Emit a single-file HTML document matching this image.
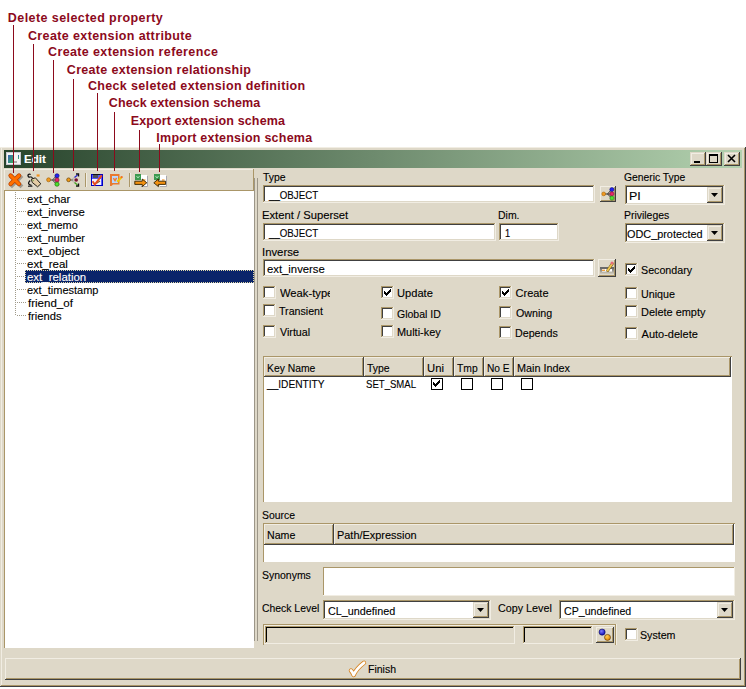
<!DOCTYPE html>
<html><head><meta charset="utf-8"><style>
html,body{margin:0;padding:0;background:#fff;width:746px;height:689px;overflow:hidden;position:relative}
body div{position:absolute}
.t{font-family:"Liberation Sans",sans-serif;white-space:nowrap;-webkit-text-stroke:0.12px currentColor}
svg{overflow:visible}
</style></head><body>
<div style="left:0px;top:147px;width:746px;height:540px;background:#ded8c8;"></div><div style="left:0px;top:147px;width:745px;height:1px;background:#f1ede3;"></div><div style="left:1px;top:148px;width:1px;height:538px;background:#f1ede3;"></div><div style="left:1px;top:685px;width:744px;height:1px;background:#aa9668;"></div><div style="left:744px;top:148px;width:1px;height:538px;background:#aa9668;"></div><div style="left:0px;top:686px;width:746px;height:1px;background:#404040;"></div><div style="left:745px;top:147px;width:1px;height:540px;background:#404040;"></div><div style="left:4px;top:150px;width:738px;height:18px;background:linear-gradient(to right, rgb(40,68,44), rgb(179,209,175));"></div><div style="left:6px;top:152px;width:15px;height:13px;background:#f4f4f4;box-shadow: inset 0 0 0 1px #c8c8d0;"></div><div style="left:8px;top:155px;width:5px;height:8px;background:linear-gradient(to bottom right, #3a64b4, #38b060);"></div><div style="left:18px;top:155px;width:1px;height:4px;background:linear-gradient(#3a64b4,#38b060);"></div><div style="left:14px;top:161px;width:3px;height:2px;background:#b0b0b0;"></div><div class="t" style="left:23.72px;top:153px;font-size:11px;line-height:13px;font-weight:bold;color:#fff;transform:scaleX(1.0550);transform-origin:0 0;">Edit</div><div style="left:690px;top:152px;width:16px;height:14px;background:#ded8c8;"></div><div style="left:690px;top:152px;width:15px;height:1px;background:#ded8c8;"></div><div style="left:690px;top:152px;width:1px;height:13px;background:#ded8c8;"></div><div style="left:691px;top:153px;width:13px;height:1px;background:#f1ede3;"></div><div style="left:691px;top:153px;width:1px;height:11px;background:#f1ede3;"></div><div style="left:691px;top:164px;width:14px;height:1px;background:#aa9668;"></div><div style="left:704px;top:153px;width:1px;height:12px;background:#aa9668;"></div><div style="left:690px;top:165px;width:16px;height:1px;background:#404040;"></div><div style="left:705px;top:152px;width:1px;height:14px;background:#404040;"></div><div style="left:706px;top:152px;width:16px;height:14px;background:#ded8c8;"></div><div style="left:706px;top:152px;width:15px;height:1px;background:#ded8c8;"></div><div style="left:706px;top:152px;width:1px;height:13px;background:#ded8c8;"></div><div style="left:707px;top:153px;width:13px;height:1px;background:#f1ede3;"></div><div style="left:707px;top:153px;width:1px;height:11px;background:#f1ede3;"></div><div style="left:707px;top:164px;width:14px;height:1px;background:#aa9668;"></div><div style="left:720px;top:153px;width:1px;height:12px;background:#aa9668;"></div><div style="left:706px;top:165px;width:16px;height:1px;background:#404040;"></div><div style="left:721px;top:152px;width:1px;height:14px;background:#404040;"></div><div style="left:724px;top:152px;width:16px;height:14px;background:#ded8c8;"></div><div style="left:724px;top:152px;width:15px;height:1px;background:#ded8c8;"></div><div style="left:724px;top:152px;width:1px;height:13px;background:#ded8c8;"></div><div style="left:725px;top:153px;width:13px;height:1px;background:#f1ede3;"></div><div style="left:725px;top:153px;width:1px;height:11px;background:#f1ede3;"></div><div style="left:725px;top:164px;width:14px;height:1px;background:#aa9668;"></div><div style="left:738px;top:153px;width:1px;height:12px;background:#aa9668;"></div><div style="left:724px;top:165px;width:16px;height:1px;background:#404040;"></div><div style="left:739px;top:152px;width:1px;height:14px;background:#404040;"></div><svg style="position:absolute;left:690px;top:152px" width="16" height="14" viewBox="0 0 16 14"><rect x="4" y="9" width="6" height="2" fill="#000"/></svg><svg style="position:absolute;left:706px;top:152px" width="16" height="14" viewBox="0 0 16 14"><rect x="3.5" y="2.5" width="8" height="8" fill="none" stroke="#000" stroke-width="1"/><rect x="3" y="2" width="9" height="2" fill="#000"/></svg><svg style="position:absolute;left:724px;top:152px" width="16" height="14" viewBox="0 0 16 14"><path d="M4 3 L11 10 M11 3 L4 10" stroke="#000" stroke-width="1.6"/></svg><div style="left:4px;top:168px;width:250px;height:23px;background:#ded8c8;"></div><div style="left:4px;top:169px;width:249px;height:1px;background:#f1ede3;"></div><div style="left:4px;top:169px;width:1px;height:21px;background:#f1ede3;"></div><div style="left:4px;top:190px;width:250px;height:1px;background:#aa9668;"></div><div style="left:253px;top:169px;width:1px;height:22px;background:#aa9668;"></div><div style="left:85px;top:173px;width:1px;height:14px;background:#aa9668;"></div><div style="left:86px;top:173px;width:1px;height:14px;background:#f1ede3;"></div><div style="left:129px;top:173px;width:1px;height:14px;background:#aa9668;"></div><div style="left:130px;top:173px;width:1px;height:14px;background:#f1ede3;"></div><svg style="position:absolute;left:8px;top:173px" width="15" height="15" viewBox="0 0 15 15"><path d="M3 3 L11.5 11.5 M11.5 3 L3 11.5" stroke="rgba(40,40,40,0.35)" stroke-width="4" stroke-linecap="square" transform="translate(1,1)"/><path d="M2.6 2.6 L11 11 M11 2.6 L2.6 11" stroke="#b84000" stroke-width="4.4" stroke-linecap="round"/><path d="M2.6 2.6 L11 11 M11 2.6 L2.6 11" stroke="#ff7000" stroke-width="3" stroke-linecap="round"/></svg><svg style="position:absolute;left:26px;top:172px" width="16" height="16" viewBox="0 0 16 16"><path d="M4.6 2.6 A1.5 1.5 0 1 0 4.6 4.6" fill="none" stroke="#111" stroke-width="1.3"/><path d="M4.8 4.6 L7.5 7" stroke="#222" stroke-width="1.2"/><path d="M5.4 7.2 L9.4 5.8 L14.8 11.8 L11.6 14.8 L6.2 10.4 Z" fill="#e4cca4" stroke="#262218" stroke-width="1"/><circle cx="7.2" cy="8.6" r="0.7" fill="#70a040"/><path d="M4.2 8.4 Q2.2 10 2.6 11.8 Q3.2 13 5.6 13.4" fill="none" stroke="#111" stroke-width="1.3"/><path d="M2 14.2 H6.4" stroke="#222" stroke-width="1.2"/><rect x="10.6" y="2.4" width="3" height="2.2" fill="#f09020"/></svg><svg style="position:absolute;left:45px;top:172px" width="16" height="16" viewBox="0 0 16 16"><path d="M5 8 L7.5 8 M7.5 8 L11 4.2 M7.5 8 L11 8 M7.5 8 L11 11.8" stroke="#444" stroke-width="1" fill="none"/><circle cx="3.6" cy="7.8" r="2" fill="#f09a20" stroke="#9a5a00" stroke-width="0.6"/><circle cx="12" cy="3.8" r="2.1" fill="#2424f0" stroke="#00006a" stroke-width="0.6"/><circle cx="12" cy="8" r="2.1" fill="#e8246a" stroke="#6a0020" stroke-width="0.6"/><circle cx="12" cy="12.2" r="2.1" fill="#50e030" stroke="#106000" stroke-width="0.6"/></svg><svg style="position:absolute;left:65px;top:172px" width="16" height="16" viewBox="0 0 16 16"><path d="M5 8 L9.5 4.5 L9.5 11.5 Z" fill="#c4c0b4"/><path d="M5 8 L8 8" stroke="#666" stroke-width="1"/><circle cx="3.6" cy="7.8" r="1.9" fill="#f09a18" stroke="#6a4000" stroke-width="0.7"/><circle cx="11.2" cy="8" r="1.8" fill="#7a1030"/><path d="M11 2 H13.5 V4.5" stroke="#111" stroke-width="1.4" fill="none"/><path d="M9.5 5.5 L12.5 3" stroke="#2828d0" stroke-width="1.3"/><path d="M11 14 H13.5 V11.5" stroke="#111" stroke-width="1.4" fill="none"/><path d="M9.5 10.5 L12.5 13" stroke="#40a020" stroke-width="1.3"/></svg><svg style="position:absolute;left:90px;top:173px" width="14" height="14" viewBox="0 0 14 14"><rect x="1" y="1" width="12" height="12" fill="#0000c0"/><rect x="2" y="2" width="10" height="10" fill="#5858ff"/><rect x="3" y="1" width="7" height="1" fill="#101018"/><rect x="3" y="2" width="5" height="3" fill="#50505a"/><rect x="2" y="6" width="9" height="6" fill="#f2f2ff"/><path d="M6.5 10.2 L10 8" stroke="#806020" stroke-width="1.2"/><path d="M2.6 8.2 L4.8 11.6 L11.8 2.4" stroke="#e84a1c" stroke-width="1.9" fill="none"/></svg><svg style="position:absolute;left:110px;top:174px" width="13" height="13" viewBox="0 0 13 13"><path d="M0 0 H9.5 V10.5 H3 L1.5 12 H0 Z" fill="#e87a30"/><rect x="2" y="2" width="6" height="7" fill="#b8d8ff"/><path d="M3.4 4.2 L5 6.6 L6.6 3.8" stroke="#f07a30" stroke-width="1.5" fill="none"/><path d="M7.2 7.8 L11.2 3.6" stroke="#f0c800" stroke-width="2.1"/><circle cx="11.6" cy="3.1" r="1.2" fill="#f07020"/></svg><svg style="position:absolute;left:134px;top:173px" width="14" height="14" viewBox="0 0 14 14"><rect x="7" y="2" width="6" height="11" fill="#ffffff"/><path d="M13.5 3 V13.5 H7" stroke="#a8a8b0" stroke-width="1" fill="none"/><rect x="9" y="6" width="2.5" height="2" fill="#f8c080"/><rect x="1" y="1" width="6" height="6" fill="#3c9a50"/><path d="M2.5 3 L4 5 L5.5 3" stroke="#b0e8c0" stroke-width="0.9" fill="none"/><path d="M0.8 8.2 H8.2 V6 L12.8 9.8 L8.2 13.6 V11.4 H0.8 Z" fill="#f39010" stroke="#302000" stroke-width="0.9"/></svg><svg style="position:absolute;left:153px;top:173px" width="14" height="14" viewBox="0 0 14 14"><rect x="7" y="2" width="6" height="11" fill="#ffffff"/><path d="M13.5 3 V13.5 H7" stroke="#a8a8b0" stroke-width="1" fill="none"/><rect x="9" y="6" width="2.5" height="2" fill="#f8c080"/><rect x="1" y="1" width="6" height="6" fill="#3c9a50"/><path d="M2.5 3 L4 5 L5.5 3" stroke="#b0e8c0" stroke-width="0.9" fill="none"/><path d="M12.6 8.2 H5.4 V6 L0.8 9.8 L5.4 13.6 V11.4 H12.6 Z" fill="#f39010" stroke="#302000" stroke-width="0.9"/></svg><div style="left:5px;top:191px;width:249px;height:457px;background:#fff;"></div><div style="left:4px;top:191px;width:1px;height:457px;background:#aa9668;"></div><svg style="position:absolute;left:15px;top:192px" width="12" height="125" viewBox="0 0 12 125"><g fill="#a09a8a"><rect x="0" y="0" width="1" height="1"/><rect x="0" y="2" width="1" height="1"/><rect x="0" y="4" width="1" height="1"/><rect x="0" y="6" width="1" height="1"/><rect x="0" y="8" width="1" height="1"/><rect x="0" y="10" width="1" height="1"/><rect x="0" y="12" width="1" height="1"/><rect x="0" y="14" width="1" height="1"/><rect x="0" y="16" width="1" height="1"/><rect x="0" y="18" width="1" height="1"/><rect x="0" y="20" width="1" height="1"/><rect x="0" y="22" width="1" height="1"/><rect x="0" y="24" width="1" height="1"/><rect x="0" y="26" width="1" height="1"/><rect x="0" y="28" width="1" height="1"/><rect x="0" y="30" width="1" height="1"/><rect x="0" y="32" width="1" height="1"/><rect x="0" y="34" width="1" height="1"/><rect x="0" y="36" width="1" height="1"/><rect x="0" y="38" width="1" height="1"/><rect x="0" y="40" width="1" height="1"/><rect x="0" y="42" width="1" height="1"/><rect x="0" y="44" width="1" height="1"/><rect x="0" y="46" width="1" height="1"/><rect x="0" y="48" width="1" height="1"/><rect x="0" y="50" width="1" height="1"/><rect x="0" y="52" width="1" height="1"/><rect x="0" y="54" width="1" height="1"/><rect x="0" y="56" width="1" height="1"/><rect x="0" y="58" width="1" height="1"/><rect x="0" y="60" width="1" height="1"/><rect x="0" y="62" width="1" height="1"/><rect x="0" y="64" width="1" height="1"/><rect x="0" y="66" width="1" height="1"/><rect x="0" y="68" width="1" height="1"/><rect x="0" y="70" width="1" height="1"/><rect x="0" y="72" width="1" height="1"/><rect x="0" y="74" width="1" height="1"/><rect x="0" y="76" width="1" height="1"/><rect x="0" y="78" width="1" height="1"/><rect x="0" y="80" width="1" height="1"/><rect x="0" y="82" width="1" height="1"/><rect x="0" y="84" width="1" height="1"/><rect x="0" y="86" width="1" height="1"/><rect x="0" y="88" width="1" height="1"/><rect x="0" y="90" width="1" height="1"/><rect x="0" y="92" width="1" height="1"/><rect x="0" y="94" width="1" height="1"/><rect x="0" y="96" width="1" height="1"/><rect x="0" y="98" width="1" height="1"/><rect x="0" y="100" width="1" height="1"/><rect x="0" y="102" width="1" height="1"/><rect x="0" y="104" width="1" height="1"/><rect x="0" y="106" width="1" height="1"/><rect x="0" y="108" width="1" height="1"/><rect x="0" y="110" width="1" height="1"/><rect x="0" y="112" width="1" height="1"/><rect x="0" y="114" width="1" height="1"/><rect x="0" y="116" width="1" height="1"/><rect x="0" y="118" width="1" height="1"/><rect x="0" y="120" width="1" height="1"/><rect x="0" y="122" width="1" height="1"/><rect x="2" y="6" width="1" height="1"/><rect x="4" y="6" width="1" height="1"/><rect x="6" y="6" width="1" height="1"/><rect x="8" y="6" width="1" height="1"/><rect x="10" y="6" width="1" height="1"/><rect x="2" y="19" width="1" height="1"/><rect x="4" y="19" width="1" height="1"/><rect x="6" y="19" width="1" height="1"/><rect x="8" y="19" width="1" height="1"/><rect x="10" y="19" width="1" height="1"/><rect x="2" y="32" width="1" height="1"/><rect x="4" y="32" width="1" height="1"/><rect x="6" y="32" width="1" height="1"/><rect x="8" y="32" width="1" height="1"/><rect x="10" y="32" width="1" height="1"/><rect x="2" y="45" width="1" height="1"/><rect x="4" y="45" width="1" height="1"/><rect x="6" y="45" width="1" height="1"/><rect x="8" y="45" width="1" height="1"/><rect x="10" y="45" width="1" height="1"/><rect x="2" y="58" width="1" height="1"/><rect x="4" y="58" width="1" height="1"/><rect x="6" y="58" width="1" height="1"/><rect x="8" y="58" width="1" height="1"/><rect x="10" y="58" width="1" height="1"/><rect x="2" y="71" width="1" height="1"/><rect x="4" y="71" width="1" height="1"/><rect x="6" y="71" width="1" height="1"/><rect x="8" y="71" width="1" height="1"/><rect x="10" y="71" width="1" height="1"/><rect x="2" y="84" width="1" height="1"/><rect x="4" y="84" width="1" height="1"/><rect x="6" y="84" width="1" height="1"/><rect x="8" y="84" width="1" height="1"/><rect x="10" y="84" width="1" height="1"/><rect x="2" y="97" width="1" height="1"/><rect x="4" y="97" width="1" height="1"/><rect x="6" y="97" width="1" height="1"/><rect x="8" y="97" width="1" height="1"/><rect x="10" y="97" width="1" height="1"/><rect x="2" y="110" width="1" height="1"/><rect x="4" y="110" width="1" height="1"/><rect x="6" y="110" width="1" height="1"/><rect x="8" y="110" width="1" height="1"/><rect x="10" y="110" width="1" height="1"/><rect x="2" y="123" width="1" height="1"/><rect x="4" y="123" width="1" height="1"/><rect x="6" y="123" width="1" height="1"/><rect x="8" y="123" width="1" height="1"/><rect x="10" y="123" width="1" height="1"/></g></svg><div class="t" style="left:26.92px;top:193px;font-size:11px;line-height:13px;font-weight:normal;color:#000;transform:scaleX(1.0255);transform-origin:0 0;">ext_char</div><div class="t" style="left:26.92px;top:206px;font-size:11px;line-height:13px;font-weight:normal;color:#000;transform:scaleX(1.0272);transform-origin:0 0;">ext_inverse</div><div class="t" style="left:26.94px;top:219px;font-size:11px;line-height:13px;font-weight:normal;color:#000;transform:scaleX(0.9876);transform-origin:0 0;">ext_memo</div><div class="t" style="left:26.93px;top:232px;font-size:11px;line-height:13px;font-weight:normal;color:#000;">ext_number</div><div class="t" style="left:26.91px;top:245px;font-size:11px;line-height:13px;font-weight:normal;color:#000;transform:scaleX(1.0485);transform-origin:0 0;">ext_object</div><div class="t" style="left:26.91px;top:258px;font-size:11px;line-height:13px;font-weight:normal;color:#000;transform:scaleX(1.0440);transform-origin:0 0;">ext_real</div><div style="left:25px;top:270px;width:229px;height:13px;background:#0a246a;box-sizing:border-box;border:1px dotted #e0d8a8;"></div><div class="t" style="left:26.91px;top:271px;font-size:11px;line-height:13px;font-weight:normal;color:#fff;transform:scaleX(1.0415);transform-origin:0 0;">ext_relation</div><div class="t" style="left:26.93px;top:284px;font-size:11px;line-height:13px;font-weight:normal;color:#000;">ext_timestamp</div><div class="t" style="left:27.84px;top:297px;font-size:11px;line-height:13px;font-weight:normal;color:#000;transform:scaleX(1.0476);transform-origin:0 0;">friend_of</div><div class="t" style="left:27.84px;top:310px;font-size:11px;line-height:13px;font-weight:normal;color:#000;transform:scaleX(1.0165);transform-origin:0 0;">friends</div><div style="left:254px;top:178px;width:1px;height:463px;background:#9c9688;"></div><div style="left:257px;top:178px;width:1px;height:463px;background:#9c9688;"></div><div class="t" style="left:262.87px;top:171px;font-size:11px;line-height:13px;font-weight:normal;color:#000;transform:scaleX(0.9486);transform-origin:0 0;">Type</div><div style="left:263px;top:185px;width:332px;height:18px;background:#fff;"></div><div style="left:263px;top:185px;width:331px;height:1px;background:#aa9668;"></div><div style="left:263px;top:185px;width:1px;height:17px;background:#aa9668;"></div><div style="left:263px;top:202px;width:332px;height:1px;background:#f1ede3;"></div><div style="left:594px;top:185px;width:1px;height:18px;background:#f1ede3;"></div><div style="left:264px;top:186px;width:329px;height:1px;background:#404040;"></div><div style="left:264px;top:186px;width:1px;height:15px;background:#404040;"></div><div style="left:264px;top:201px;width:330px;height:1px;background:#ded8c8;"></div><div style="left:593px;top:186px;width:1px;height:16px;background:#ded8c8;"></div><div class="t" style="left:268.95px;top:189px;font-size:11px;line-height:13px;font-weight:normal;color:#000;transform:scaleX(0.8822);transform-origin:0 0;">__OBJECT</div><div style="left:600px;top:186px;width:16px;height:16px;background:#ded8c8;"></div><div style="left:600px;top:186px;width:15px;height:1px;background:#f1ede3;"></div><div style="left:600px;top:186px;width:1px;height:15px;background:#f1ede3;"></div><div style="left:601px;top:200px;width:14px;height:1px;background:#aa9668;"></div><div style="left:614px;top:187px;width:1px;height:14px;background:#aa9668;"></div><div style="left:600px;top:201px;width:16px;height:1px;background:#404040;"></div><div style="left:615px;top:186px;width:1px;height:16px;background:#404040;"></div><svg style="position:absolute;left:600px;top:186px" width="16" height="16" viewBox="0 0 16 16"><path d="M5 8 L7.5 8 M7.5 8 L11.5 3.6 M7.5 8 L11.5 8 M7.5 8 L11.5 12" stroke="#333" stroke-width="1" fill="none"/><circle cx="3.7" cy="7.9" r="1.9" fill="#f09a20" stroke="#9a5a00" stroke-width="0.5"/><circle cx="11.9" cy="3.6" r="2.1" fill="#2020f0" stroke="#00006a" stroke-width="0.5"/><circle cx="11.9" cy="7.9" r="2.1" fill="#e8246a" stroke="#6a0020" stroke-width="0.5"/><circle cx="11.9" cy="12.1" r="2.1" fill="#50e030" stroke="#106000" stroke-width="0.5"/></svg><div class="t" style="left:624.28px;top:171px;font-size:11px;line-height:13px;font-weight:normal;color:#000;transform:scaleX(0.9387);transform-origin:0 0;">Generic Type</div><div style="left:625px;top:185px;width:100px;height:20px;background:#fff;"></div><div style="left:625px;top:185px;width:99px;height:1px;background:#aa9668;"></div><div style="left:625px;top:185px;width:1px;height:19px;background:#aa9668;"></div><div style="left:625px;top:204px;width:100px;height:1px;background:#f1ede3;"></div><div style="left:724px;top:185px;width:1px;height:20px;background:#f1ede3;"></div><div style="left:626px;top:186px;width:97px;height:1px;background:#404040;"></div><div style="left:626px;top:186px;width:1px;height:17px;background:#404040;"></div><div style="left:626px;top:203px;width:98px;height:1px;background:#ded8c8;"></div><div style="left:723px;top:186px;width:1px;height:18px;background:#ded8c8;"></div><div style="left:707px;top:187px;width:16px;height:16px;background:#ded8c8;"></div><div style="left:707px;top:187px;width:15px;height:1px;background:#ded8c8;"></div><div style="left:707px;top:187px;width:1px;height:15px;background:#ded8c8;"></div><div style="left:708px;top:188px;width:13px;height:1px;background:#f1ede3;"></div><div style="left:708px;top:188px;width:1px;height:13px;background:#f1ede3;"></div><div style="left:708px;top:201px;width:14px;height:1px;background:#aa9668;"></div><div style="left:721px;top:188px;width:1px;height:14px;background:#aa9668;"></div><div style="left:707px;top:202px;width:16px;height:1px;background:#404040;"></div><div style="left:722px;top:187px;width:1px;height:16px;background:#404040;"></div><svg style="position:absolute;left:711px;top:193px" width="7" height="4" viewBox="0 0 7 4"><path d="M0 0 H7 L3.5 4 Z" fill="#000"/></svg><div class="t" style="left:629.28px;top:190px;font-size:11px;line-height:13px;font-weight:normal;color:#000;transform:scaleX(1.1327);transform-origin:0 0;width:68.62px;overflow:hidden;">PI</div><div class="t" style="left:261.78px;top:209px;font-size:11px;line-height:13px;font-weight:normal;color:#000;transform:scaleX(1.0216);transform-origin:0 0;">Extent / Superset</div><div style="left:263px;top:223px;width:233px;height:18px;background:#fff;"></div><div style="left:263px;top:223px;width:232px;height:1px;background:#aa9668;"></div><div style="left:263px;top:223px;width:1px;height:17px;background:#aa9668;"></div><div style="left:263px;top:240px;width:233px;height:1px;background:#f1ede3;"></div><div style="left:495px;top:223px;width:1px;height:18px;background:#f1ede3;"></div><div style="left:264px;top:224px;width:230px;height:1px;background:#404040;"></div><div style="left:264px;top:224px;width:1px;height:15px;background:#404040;"></div><div style="left:264px;top:239px;width:231px;height:1px;background:#ded8c8;"></div><div style="left:494px;top:224px;width:1px;height:16px;background:#ded8c8;"></div><div class="t" style="left:268.95px;top:227px;font-size:11px;line-height:13px;font-weight:normal;color:#000;transform:scaleX(0.8822);transform-origin:0 0;">__OBJECT</div><div class="t" style="left:498.04px;top:209px;font-size:11px;line-height:13px;font-weight:normal;color:#000;transform:scaleX(0.9517);transform-origin:0 0;">Dim.</div><div style="left:499px;top:223px;width:60px;height:18px;background:#fff;"></div><div style="left:499px;top:223px;width:59px;height:1px;background:#aa9668;"></div><div style="left:499px;top:223px;width:1px;height:17px;background:#aa9668;"></div><div style="left:499px;top:240px;width:60px;height:1px;background:#f1ede3;"></div><div style="left:558px;top:223px;width:1px;height:18px;background:#f1ede3;"></div><div style="left:500px;top:224px;width:57px;height:1px;background:#404040;"></div><div style="left:500px;top:224px;width:1px;height:15px;background:#404040;"></div><div style="left:500px;top:239px;width:58px;height:1px;background:#ded8c8;"></div><div style="left:557px;top:224px;width:1px;height:16px;background:#ded8c8;"></div><div class="t" style="left:504.59px;top:227px;font-size:11px;line-height:13px;font-weight:normal;color:#000;transform:scaleX(0.8434);transform-origin:0 0;">1</div><div class="t" style="left:623.94px;top:209px;font-size:11px;line-height:13px;font-weight:normal;color:#000;transform:scaleX(0.9486);transform-origin:0 0;">Privileges</div><div style="left:625px;top:223px;width:100px;height:20px;background:#fff;"></div><div style="left:625px;top:223px;width:99px;height:1px;background:#aa9668;"></div><div style="left:625px;top:223px;width:1px;height:19px;background:#aa9668;"></div><div style="left:625px;top:242px;width:100px;height:1px;background:#f1ede3;"></div><div style="left:724px;top:223px;width:1px;height:20px;background:#f1ede3;"></div><div style="left:626px;top:224px;width:97px;height:1px;background:#404040;"></div><div style="left:626px;top:224px;width:1px;height:17px;background:#404040;"></div><div style="left:626px;top:241px;width:98px;height:1px;background:#ded8c8;"></div><div style="left:723px;top:224px;width:1px;height:18px;background:#ded8c8;"></div><div style="left:707px;top:225px;width:16px;height:16px;background:#ded8c8;"></div><div style="left:707px;top:225px;width:15px;height:1px;background:#ded8c8;"></div><div style="left:707px;top:225px;width:1px;height:15px;background:#ded8c8;"></div><div style="left:708px;top:226px;width:13px;height:1px;background:#f1ede3;"></div><div style="left:708px;top:226px;width:1px;height:13px;background:#f1ede3;"></div><div style="left:708px;top:239px;width:14px;height:1px;background:#aa9668;"></div><div style="left:721px;top:226px;width:1px;height:14px;background:#aa9668;"></div><div style="left:707px;top:240px;width:16px;height:1px;background:#404040;"></div><div style="left:722px;top:225px;width:1px;height:16px;background:#404040;"></div><svg style="position:absolute;left:711px;top:231px" width="7" height="4" viewBox="0 0 7 4"><path d="M0 0 H7 L3.5 4 Z" fill="#000"/></svg><div class="t" style="left:627.19px;top:228px;font-size:11px;line-height:13px;font-weight:normal;color:#000;transform:scaleX(0.9881);transform-origin:0 0;width:80.78px;overflow:hidden;">ODC_protected</div><div class="t" style="left:262.25px;top:246px;font-size:11px;line-height:13px;font-weight:normal;color:#000;transform:scaleX(1.0298);transform-origin:0 0;">Inverse</div><div style="left:263px;top:259px;width:332px;height:18px;background:#fff;"></div><div style="left:263px;top:259px;width:331px;height:1px;background:#aa9668;"></div><div style="left:263px;top:259px;width:1px;height:17px;background:#aa9668;"></div><div style="left:263px;top:276px;width:332px;height:1px;background:#f1ede3;"></div><div style="left:594px;top:259px;width:1px;height:18px;background:#f1ede3;"></div><div style="left:264px;top:260px;width:329px;height:1px;background:#404040;"></div><div style="left:264px;top:260px;width:1px;height:15px;background:#404040;"></div><div style="left:264px;top:275px;width:330px;height:1px;background:#ded8c8;"></div><div style="left:593px;top:260px;width:1px;height:16px;background:#ded8c8;"></div><div class="t" style="left:267.02px;top:263px;font-size:11px;line-height:13px;font-weight:normal;color:#000;transform:scaleX(1.0272);transform-origin:0 0;">ext_inverse</div><div style="left:598px;top:259px;width:18px;height:18px;background:#ded8c8;"></div><div style="left:598px;top:259px;width:17px;height:1px;background:#f1ede3;"></div><div style="left:598px;top:259px;width:1px;height:17px;background:#f1ede3;"></div><div style="left:599px;top:275px;width:16px;height:1px;background:#aa9668;"></div><div style="left:614px;top:260px;width:1px;height:16px;background:#aa9668;"></div><div style="left:598px;top:276px;width:18px;height:1px;background:#404040;"></div><div style="left:615px;top:259px;width:1px;height:18px;background:#404040;"></div><svg style="position:absolute;left:598px;top:259px" width="18" height="18" viewBox="0 0 18 18"><defs><linearGradient id="gsh" x1="0" y1="0" x2="0" y2="1"><stop offset="0" stop-color="#5a5a5a"/><stop offset="1" stop-color="#ded8c8"/></linearGradient></defs><rect x="2" y="8" width="14" height="7.5" fill="url(#gsh)"/><rect x="2" y="8" width="14" height="2" fill="#6a6a6a"/><rect x="4" y="10" width="10" height="2.6" fill="#ffffff"/><rect x="4" y="10.6" width="3" height="1.4" fill="#f0a040"/><path d="M9.6 11.6 L14.4 4.6" stroke="#7a6020" stroke-width="2.8" stroke-linecap="round"/><path d="M9.6 11.6 L14.4 4.6" stroke="#f0c850" stroke-width="1.8" stroke-linecap="round"/><circle cx="14" cy="4" r="1.5" fill="#e86a7a"/></svg><div style="left:625px;top:263px;width:13px;height:13px;background:#fff;"></div><div style="left:625px;top:263px;width:12px;height:1px;background:#aa9668;"></div><div style="left:625px;top:263px;width:1px;height:12px;background:#aa9668;"></div><div style="left:625px;top:275px;width:13px;height:1px;background:#f1ede3;"></div><div style="left:637px;top:263px;width:1px;height:13px;background:#f1ede3;"></div><div style="left:626px;top:264px;width:10px;height:1px;background:#404040;"></div><div style="left:626px;top:264px;width:1px;height:10px;background:#404040;"></div><div style="left:626px;top:274px;width:11px;height:1px;background:#ded8c8;"></div><div style="left:636px;top:264px;width:1px;height:11px;background:#ded8c8;"></div><div style="left:628px;top:268px;width:1px;height:3px;background:#000;"></div><div style="left:629px;top:269px;width:1px;height:3px;background:#000;"></div><div style="left:630px;top:270px;width:1px;height:3px;background:#000;"></div><div style="left:631px;top:269px;width:1px;height:3px;background:#000;"></div><div style="left:632px;top:268px;width:1px;height:3px;background:#000;"></div><div style="left:633px;top:267px;width:1px;height:3px;background:#000;"></div><div style="left:634px;top:266px;width:1px;height:3px;background:#000;"></div><div class="t" style="left:641.11px;top:264px;font-size:11px;line-height:13px;font-weight:normal;color:#000;transform:scaleX(0.9718);transform-origin:0 0;">Secondary</div><div style="left:263px;top:286px;width:13px;height:13px;background:#fff;"></div><div style="left:263px;top:286px;width:12px;height:1px;background:#aa9668;"></div><div style="left:263px;top:286px;width:1px;height:12px;background:#aa9668;"></div><div style="left:263px;top:298px;width:13px;height:1px;background:#f1ede3;"></div><div style="left:275px;top:286px;width:1px;height:13px;background:#f1ede3;"></div><div style="left:264px;top:287px;width:10px;height:1px;background:#404040;"></div><div style="left:264px;top:287px;width:1px;height:10px;background:#404040;"></div><div style="left:264px;top:297px;width:11px;height:1px;background:#ded8c8;"></div><div style="left:274px;top:287px;width:1px;height:11px;background:#ded8c8;"></div><div class="t" style="left:279.65px;top:287px;font-size:11px;line-height:13px;font-weight:normal;color:#000;transform:scaleX(1.0185);transform-origin:0 0;width:49.04px;overflow:hidden;">Weak-type</div><div style="left:263px;top:304px;width:13px;height:13px;background:#fff;"></div><div style="left:263px;top:304px;width:12px;height:1px;background:#aa9668;"></div><div style="left:263px;top:304px;width:1px;height:12px;background:#aa9668;"></div><div style="left:263px;top:316px;width:13px;height:1px;background:#f1ede3;"></div><div style="left:275px;top:304px;width:1px;height:13px;background:#f1ede3;"></div><div style="left:264px;top:305px;width:10px;height:1px;background:#404040;"></div><div style="left:264px;top:305px;width:1px;height:10px;background:#404040;"></div><div style="left:264px;top:315px;width:11px;height:1px;background:#ded8c8;"></div><div style="left:274px;top:305px;width:1px;height:11px;background:#ded8c8;"></div><div class="t" style="left:279.36px;top:305px;font-size:11px;line-height:13px;font-weight:normal;color:#000;transform:scaleX(0.9665);transform-origin:0 0;">Transient</div><div style="left:263px;top:325px;width:13px;height:13px;background:#fff;"></div><div style="left:263px;top:325px;width:12px;height:1px;background:#aa9668;"></div><div style="left:263px;top:325px;width:1px;height:12px;background:#aa9668;"></div><div style="left:263px;top:337px;width:13px;height:1px;background:#f1ede3;"></div><div style="left:275px;top:325px;width:1px;height:13px;background:#f1ede3;"></div><div style="left:264px;top:326px;width:10px;height:1px;background:#404040;"></div><div style="left:264px;top:326px;width:1px;height:10px;background:#404040;"></div><div style="left:264px;top:336px;width:11px;height:1px;background:#ded8c8;"></div><div style="left:274px;top:326px;width:1px;height:11px;background:#ded8c8;"></div><div class="t" style="left:279.55px;top:326px;font-size:11px;line-height:13px;font-weight:normal;color:#000;transform:scaleX(0.9738);transform-origin:0 0;">Virtual</div><div style="left:381px;top:286px;width:13px;height:13px;background:#fff;"></div><div style="left:381px;top:286px;width:12px;height:1px;background:#aa9668;"></div><div style="left:381px;top:286px;width:1px;height:12px;background:#aa9668;"></div><div style="left:381px;top:298px;width:13px;height:1px;background:#f1ede3;"></div><div style="left:393px;top:286px;width:1px;height:13px;background:#f1ede3;"></div><div style="left:382px;top:287px;width:10px;height:1px;background:#404040;"></div><div style="left:382px;top:287px;width:1px;height:10px;background:#404040;"></div><div style="left:382px;top:297px;width:11px;height:1px;background:#ded8c8;"></div><div style="left:392px;top:287px;width:1px;height:11px;background:#ded8c8;"></div><div style="left:384px;top:291px;width:1px;height:3px;background:#000;"></div><div style="left:385px;top:292px;width:1px;height:3px;background:#000;"></div><div style="left:386px;top:293px;width:1px;height:3px;background:#000;"></div><div style="left:387px;top:292px;width:1px;height:3px;background:#000;"></div><div style="left:388px;top:291px;width:1px;height:3px;background:#000;"></div><div style="left:389px;top:290px;width:1px;height:3px;background:#000;"></div><div style="left:390px;top:289px;width:1px;height:3px;background:#000;"></div><div class="t" style="left:396.74px;top:287px;font-size:11px;line-height:13px;font-weight:normal;color:#000;transform:scaleX(1.0107);transform-origin:0 0;">Update</div><div style="left:381px;top:307px;width:13px;height:13px;background:#fff;"></div><div style="left:381px;top:307px;width:12px;height:1px;background:#aa9668;"></div><div style="left:381px;top:307px;width:1px;height:12px;background:#aa9668;"></div><div style="left:381px;top:319px;width:13px;height:1px;background:#f1ede3;"></div><div style="left:393px;top:307px;width:1px;height:13px;background:#f1ede3;"></div><div style="left:382px;top:308px;width:10px;height:1px;background:#404040;"></div><div style="left:382px;top:308px;width:1px;height:10px;background:#404040;"></div><div style="left:382px;top:318px;width:11px;height:1px;background:#ded8c8;"></div><div style="left:392px;top:308px;width:1px;height:11px;background:#ded8c8;"></div><div class="t" style="left:397.07px;top:308px;font-size:11px;line-height:13px;font-weight:normal;color:#000;transform:scaleX(0.9559);transform-origin:0 0;">Global ID</div><div style="left:381px;top:325px;width:13px;height:13px;background:#fff;"></div><div style="left:381px;top:325px;width:12px;height:1px;background:#aa9668;"></div><div style="left:381px;top:325px;width:1px;height:12px;background:#aa9668;"></div><div style="left:381px;top:337px;width:13px;height:1px;background:#f1ede3;"></div><div style="left:393px;top:325px;width:1px;height:13px;background:#f1ede3;"></div><div style="left:382px;top:326px;width:10px;height:1px;background:#404040;"></div><div style="left:382px;top:326px;width:1px;height:10px;background:#404040;"></div><div style="left:382px;top:336px;width:11px;height:1px;background:#ded8c8;"></div><div style="left:392px;top:326px;width:1px;height:11px;background:#ded8c8;"></div><div class="t" style="left:396.70px;top:326px;font-size:11px;line-height:13px;font-weight:normal;color:#000;transform:scaleX(0.9935);transform-origin:0 0;">Multi-key</div><div style="left:499px;top:286px;width:13px;height:13px;background:#fff;"></div><div style="left:499px;top:286px;width:12px;height:1px;background:#aa9668;"></div><div style="left:499px;top:286px;width:1px;height:12px;background:#aa9668;"></div><div style="left:499px;top:298px;width:13px;height:1px;background:#f1ede3;"></div><div style="left:511px;top:286px;width:1px;height:13px;background:#f1ede3;"></div><div style="left:500px;top:287px;width:10px;height:1px;background:#404040;"></div><div style="left:500px;top:287px;width:1px;height:10px;background:#404040;"></div><div style="left:500px;top:297px;width:11px;height:1px;background:#ded8c8;"></div><div style="left:510px;top:287px;width:1px;height:11px;background:#ded8c8;"></div><div style="left:502px;top:291px;width:1px;height:3px;background:#000;"></div><div style="left:503px;top:292px;width:1px;height:3px;background:#000;"></div><div style="left:504px;top:293px;width:1px;height:3px;background:#000;"></div><div style="left:505px;top:292px;width:1px;height:3px;background:#000;"></div><div style="left:506px;top:291px;width:1px;height:3px;background:#000;"></div><div style="left:507px;top:290px;width:1px;height:3px;background:#000;"></div><div style="left:508px;top:289px;width:1px;height:3px;background:#000;"></div><div class="t" style="left:515.54px;top:287px;font-size:11px;line-height:13px;font-weight:normal;color:#000;">Create</div><div style="left:499px;top:306px;width:13px;height:13px;background:#fff;"></div><div style="left:499px;top:306px;width:12px;height:1px;background:#aa9668;"></div><div style="left:499px;top:306px;width:1px;height:12px;background:#aa9668;"></div><div style="left:499px;top:318px;width:13px;height:1px;background:#f1ede3;"></div><div style="left:511px;top:306px;width:1px;height:13px;background:#f1ede3;"></div><div style="left:500px;top:307px;width:10px;height:1px;background:#404040;"></div><div style="left:500px;top:307px;width:1px;height:10px;background:#404040;"></div><div style="left:500px;top:317px;width:11px;height:1px;background:#ded8c8;"></div><div style="left:510px;top:307px;width:1px;height:11px;background:#ded8c8;"></div><div class="t" style="left:515.59px;top:307px;font-size:11px;line-height:13px;font-weight:normal;color:#000;transform:scaleX(0.9704);transform-origin:0 0;">Owning</div><div style="left:499px;top:326px;width:13px;height:13px;background:#fff;"></div><div style="left:499px;top:326px;width:12px;height:1px;background:#aa9668;"></div><div style="left:499px;top:326px;width:1px;height:12px;background:#aa9668;"></div><div style="left:499px;top:338px;width:13px;height:1px;background:#f1ede3;"></div><div style="left:511px;top:326px;width:1px;height:13px;background:#f1ede3;"></div><div style="left:500px;top:327px;width:10px;height:1px;background:#404040;"></div><div style="left:500px;top:327px;width:1px;height:10px;background:#404040;"></div><div style="left:500px;top:337px;width:11px;height:1px;background:#ded8c8;"></div><div style="left:510px;top:327px;width:1px;height:11px;background:#ded8c8;"></div><div class="t" style="left:515.22px;top:327px;font-size:11px;line-height:13px;font-weight:normal;color:#000;transform:scaleX(0.9712);transform-origin:0 0;">Depends</div><div style="left:625px;top:287px;width:13px;height:13px;background:#fff;"></div><div style="left:625px;top:287px;width:12px;height:1px;background:#aa9668;"></div><div style="left:625px;top:287px;width:1px;height:12px;background:#aa9668;"></div><div style="left:625px;top:299px;width:13px;height:1px;background:#f1ede3;"></div><div style="left:637px;top:287px;width:1px;height:13px;background:#f1ede3;"></div><div style="left:626px;top:288px;width:10px;height:1px;background:#404040;"></div><div style="left:626px;top:288px;width:1px;height:10px;background:#404040;"></div><div style="left:626px;top:298px;width:11px;height:1px;background:#ded8c8;"></div><div style="left:636px;top:288px;width:1px;height:11px;background:#ded8c8;"></div><div class="t" style="left:640.77px;top:288px;font-size:11px;line-height:13px;font-weight:normal;color:#000;transform:scaleX(0.9755);transform-origin:0 0;">Unique</div><div style="left:625px;top:305px;width:13px;height:13px;background:#fff;"></div><div style="left:625px;top:305px;width:12px;height:1px;background:#aa9668;"></div><div style="left:625px;top:305px;width:1px;height:12px;background:#aa9668;"></div><div style="left:625px;top:317px;width:13px;height:1px;background:#f1ede3;"></div><div style="left:637px;top:305px;width:1px;height:13px;background:#f1ede3;"></div><div style="left:626px;top:306px;width:10px;height:1px;background:#404040;"></div><div style="left:626px;top:306px;width:1px;height:10px;background:#404040;"></div><div style="left:626px;top:316px;width:11px;height:1px;background:#ded8c8;"></div><div style="left:636px;top:306px;width:1px;height:11px;background:#ded8c8;"></div><div class="t" style="left:640.70px;top:306px;font-size:11px;line-height:13px;font-weight:normal;color:#000;transform:scaleX(0.9940);transform-origin:0 0;">Delete empty</div><div style="left:625px;top:327px;width:13px;height:13px;background:#fff;"></div><div style="left:625px;top:327px;width:12px;height:1px;background:#aa9668;"></div><div style="left:625px;top:327px;width:1px;height:12px;background:#aa9668;"></div><div style="left:625px;top:339px;width:13px;height:1px;background:#f1ede3;"></div><div style="left:637px;top:327px;width:1px;height:13px;background:#f1ede3;"></div><div style="left:626px;top:328px;width:10px;height:1px;background:#404040;"></div><div style="left:626px;top:328px;width:1px;height:10px;background:#404040;"></div><div style="left:626px;top:338px;width:11px;height:1px;background:#ded8c8;"></div><div style="left:636px;top:328px;width:1px;height:11px;background:#ded8c8;"></div><div class="t" style="left:641.58px;top:328px;font-size:11px;line-height:13px;font-weight:normal;color:#000;">Auto-delete</div><div style="left:263px;top:356px;width:469px;height:146px;background:#fff;"></div><div style="left:263px;top:356px;width:469px;height:1px;background:#aa9668;"></div><div style="left:263px;top:356px;width:1px;height:146px;background:#aa9668;"></div><div style="left:264px;top:357px;width:100px;height:20px;background:#ded8c8;"></div><div style="left:264px;top:357px;width:99px;height:1px;background:#f1ede3;"></div><div style="left:264px;top:357px;width:1px;height:19px;background:#f1ede3;"></div><div style="left:264px;top:376px;width:100px;height:1px;background:#404040;"></div><div style="left:363px;top:357px;width:1px;height:20px;background:#404040;"></div><div style="left:265px;top:375px;width:98px;height:1px;background:#aa9668;"></div><div style="left:362px;top:358px;width:1px;height:18px;background:#aa9668;"></div><div class="t" style="left:266.85px;top:362px;font-size:11px;line-height:13px;font-weight:normal;color:#000;transform:scaleX(0.9407);transform-origin:0 0;width:101.89px;overflow:hidden;">Key Name</div><div style="left:364px;top:357px;width:60px;height:20px;background:#ded8c8;"></div><div style="left:364px;top:357px;width:59px;height:1px;background:#f1ede3;"></div><div style="left:364px;top:357px;width:1px;height:19px;background:#f1ede3;"></div><div style="left:364px;top:376px;width:60px;height:1px;background:#404040;"></div><div style="left:423px;top:357px;width:1px;height:20px;background:#404040;"></div><div style="left:365px;top:375px;width:58px;height:1px;background:#aa9668;"></div><div style="left:422px;top:358px;width:1px;height:18px;background:#aa9668;"></div><div class="t" style="left:367.47px;top:362px;font-size:11px;line-height:13px;font-weight:normal;color:#000;transform:scaleX(0.9486);transform-origin:0 0;width:58.23px;overflow:hidden;">Type</div><div style="left:424px;top:357px;width:30px;height:20px;background:#ded8c8;"></div><div style="left:424px;top:357px;width:29px;height:1px;background:#f1ede3;"></div><div style="left:424px;top:357px;width:1px;height:19px;background:#f1ede3;"></div><div style="left:424px;top:376px;width:30px;height:1px;background:#404040;"></div><div style="left:453px;top:357px;width:1px;height:20px;background:#404040;"></div><div style="left:425px;top:375px;width:28px;height:1px;background:#aa9668;"></div><div style="left:452px;top:358px;width:1px;height:18px;background:#aa9668;"></div><div class="t" style="left:426.83px;top:362px;font-size:11px;line-height:13px;font-weight:normal;color:#000;transform:scaleX(1.0258);transform-origin:0 0;width:25.22px;overflow:hidden;">Uni</div><div style="left:454px;top:357px;width:30px;height:20px;background:#ded8c8;"></div><div style="left:454px;top:357px;width:29px;height:1px;background:#f1ede3;"></div><div style="left:454px;top:357px;width:1px;height:19px;background:#f1ede3;"></div><div style="left:454px;top:376px;width:30px;height:1px;background:#404040;"></div><div style="left:483px;top:357px;width:1px;height:20px;background:#404040;"></div><div style="left:455px;top:375px;width:28px;height:1px;background:#aa9668;"></div><div style="left:482px;top:358px;width:1px;height:18px;background:#aa9668;"></div><div class="t" style="left:457.47px;top:362px;font-size:11px;line-height:13px;font-weight:normal;color:#000;transform:scaleX(0.9394);transform-origin:0 0;width:26.86px;overflow:hidden;">Tmp</div><div style="left:484px;top:357px;width:30px;height:20px;background:#ded8c8;"></div><div style="left:484px;top:357px;width:29px;height:1px;background:#f1ede3;"></div><div style="left:484px;top:357px;width:1px;height:19px;background:#f1ede3;"></div><div style="left:484px;top:376px;width:30px;height:1px;background:#404040;"></div><div style="left:513px;top:357px;width:1px;height:20px;background:#404040;"></div><div style="left:485px;top:375px;width:28px;height:1px;background:#aa9668;"></div><div style="left:512px;top:358px;width:1px;height:18px;background:#aa9668;"></div><div class="t" style="left:486.86px;top:362px;font-size:11px;line-height:13px;font-weight:normal;color:#000;transform:scaleX(0.9272);transform-origin:0 0;width:27.86px;overflow:hidden;">No E</div><div style="left:514px;top:357px;width:217px;height:20px;background:#ded8c8;"></div><div style="left:514px;top:357px;width:216px;height:1px;background:#f1ede3;"></div><div style="left:514px;top:357px;width:1px;height:19px;background:#f1ede3;"></div><div style="left:514px;top:376px;width:217px;height:1px;background:#404040;"></div><div style="left:730px;top:357px;width:1px;height:20px;background:#404040;"></div><div style="left:515px;top:375px;width:215px;height:1px;background:#aa9668;"></div><div style="left:729px;top:358px;width:1px;height:18px;background:#aa9668;"></div><div class="t" style="left:516.81px;top:362px;font-size:11px;line-height:13px;font-weight:normal;color:#000;transform:scaleX(0.9851);transform-origin:0 0;width:216.11px;overflow:hidden;">Main Index</div><div class="t" style="left:266.85px;top:378px;font-size:11px;line-height:13px;font-weight:normal;color:#000;transform:scaleX(0.9234);transform-origin:0 0;">__IDENTITY</div><div class="t" style="left:366.26px;top:378px;font-size:11px;line-height:13px;font-weight:normal;color:#000;transform:scaleX(0.8710);transform-origin:0 0;">SET_SMAL</div><div style="left:431px;top:378px;width:12px;height:12px;background:#000;"></div><div style="left:432px;top:379px;width:10px;height:10px;background:#fff;"></div><div style="left:433px;top:382px;width:1px;height:3px;background:#000;"></div><div style="left:434px;top:383px;width:1px;height:3px;background:#000;"></div><div style="left:435px;top:384px;width:1px;height:3px;background:#000;"></div><div style="left:436px;top:383px;width:1px;height:3px;background:#000;"></div><div style="left:437px;top:382px;width:1px;height:3px;background:#000;"></div><div style="left:438px;top:381px;width:1px;height:3px;background:#000;"></div><div style="left:439px;top:380px;width:1px;height:3px;background:#000;"></div><div style="left:461px;top:378px;width:12px;height:12px;background:#000;"></div><div style="left:462px;top:379px;width:10px;height:10px;background:#fff;"></div><div style="left:491px;top:378px;width:12px;height:12px;background:#000;"></div><div style="left:492px;top:379px;width:10px;height:10px;background:#fff;"></div><div style="left:521px;top:378px;width:12px;height:12px;background:#000;"></div><div style="left:522px;top:379px;width:10px;height:10px;background:#fff;"></div><div class="t" style="left:262.33px;top:509px;font-size:11px;line-height:13px;font-weight:normal;color:#000;transform:scaleX(0.9449);transform-origin:0 0;">Source</div><div style="left:263px;top:523px;width:472px;height:39px;background:#fff;"></div><div style="left:263px;top:523px;width:472px;height:1px;background:#aa9668;"></div><div style="left:263px;top:523px;width:1px;height:39px;background:#aa9668;"></div><div style="left:264px;top:524px;width:70px;height:21px;background:#ded8c8;"></div><div style="left:264px;top:524px;width:69px;height:1px;background:#f1ede3;"></div><div style="left:264px;top:524px;width:1px;height:20px;background:#f1ede3;"></div><div style="left:264px;top:544px;width:70px;height:1px;background:#404040;"></div><div style="left:333px;top:524px;width:1px;height:21px;background:#404040;"></div><div style="left:265px;top:543px;width:68px;height:1px;background:#aa9668;"></div><div style="left:332px;top:525px;width:1px;height:19px;background:#aa9668;"></div><div class="t" style="left:266.63px;top:529px;font-size:11px;line-height:13px;font-weight:normal;color:#000;transform:scaleX(0.9660);transform-origin:0 0;">Name</div><div style="left:334px;top:524px;width:400px;height:21px;background:#ded8c8;"></div><div style="left:334px;top:524px;width:399px;height:1px;background:#f1ede3;"></div><div style="left:334px;top:524px;width:1px;height:20px;background:#f1ede3;"></div><div style="left:334px;top:544px;width:400px;height:1px;background:#404040;"></div><div style="left:733px;top:524px;width:1px;height:21px;background:#404040;"></div><div style="left:335px;top:543px;width:398px;height:1px;background:#aa9668;"></div><div style="left:732px;top:525px;width:1px;height:19px;background:#aa9668;"></div><div class="t" style="left:336.60px;top:529px;font-size:11px;line-height:13px;font-weight:normal;color:#000;transform:scaleX(0.9939);transform-origin:0 0;">Path/Expression</div><div class="t" style="left:262.32px;top:569px;font-size:11px;line-height:13px;font-weight:normal;color:#000;transform:scaleX(0.9513);transform-origin:0 0;">Synonyms</div><div style="left:323px;top:567px;width:412px;height:29px;background:#fff;"></div><div style="left:323px;top:567px;width:411px;height:1px;background:#aa9668;"></div><div style="left:323px;top:567px;width:1px;height:28px;background:#aa9668;"></div><div style="left:323px;top:595px;width:412px;height:1px;background:#f1ede3;"></div><div style="left:734px;top:567px;width:1px;height:29px;background:#f1ede3;"></div><div class="t" style="left:262.27px;top:602px;font-size:11px;line-height:13px;font-weight:normal;color:#000;transform:scaleX(0.9453);transform-origin:0 0;">Check Level</div><div style="left:323px;top:600px;width:168px;height:20px;background:#fff;"></div><div style="left:323px;top:600px;width:167px;height:1px;background:#aa9668;"></div><div style="left:323px;top:600px;width:1px;height:19px;background:#aa9668;"></div><div style="left:323px;top:619px;width:168px;height:1px;background:#f1ede3;"></div><div style="left:490px;top:600px;width:1px;height:20px;background:#f1ede3;"></div><div style="left:324px;top:601px;width:165px;height:1px;background:#404040;"></div><div style="left:324px;top:601px;width:1px;height:17px;background:#404040;"></div><div style="left:324px;top:618px;width:166px;height:1px;background:#ded8c8;"></div><div style="left:489px;top:601px;width:1px;height:18px;background:#ded8c8;"></div><div style="left:473px;top:602px;width:16px;height:16px;background:#ded8c8;"></div><div style="left:473px;top:602px;width:15px;height:1px;background:#ded8c8;"></div><div style="left:473px;top:602px;width:1px;height:15px;background:#ded8c8;"></div><div style="left:474px;top:603px;width:13px;height:1px;background:#f1ede3;"></div><div style="left:474px;top:603px;width:1px;height:13px;background:#f1ede3;"></div><div style="left:474px;top:616px;width:14px;height:1px;background:#aa9668;"></div><div style="left:487px;top:603px;width:1px;height:14px;background:#aa9668;"></div><div style="left:473px;top:617px;width:16px;height:1px;background:#404040;"></div><div style="left:488px;top:602px;width:1px;height:16px;background:#404040;"></div><svg style="position:absolute;left:477px;top:608px" width="7" height="4" viewBox="0 0 7 4"><path d="M0 0 H7 L3.5 4 Z" fill="#000"/></svg><div class="t" style="left:327.85px;top:605px;font-size:11px;line-height:13px;font-weight:normal;color:#000;transform:scaleX(0.9816);transform-origin:0 0;width:147.87px;overflow:hidden;">CL_undefined</div><div class="t" style="left:498.05px;top:602px;font-size:11px;line-height:13px;font-weight:normal;color:#000;transform:scaleX(0.9770);transform-origin:0 0;">Copy Level</div><div style="left:559px;top:600px;width:176px;height:20px;background:#fff;"></div><div style="left:559px;top:600px;width:175px;height:1px;background:#aa9668;"></div><div style="left:559px;top:600px;width:1px;height:19px;background:#aa9668;"></div><div style="left:559px;top:619px;width:176px;height:1px;background:#f1ede3;"></div><div style="left:734px;top:600px;width:1px;height:20px;background:#f1ede3;"></div><div style="left:560px;top:601px;width:173px;height:1px;background:#404040;"></div><div style="left:560px;top:601px;width:1px;height:17px;background:#404040;"></div><div style="left:560px;top:618px;width:174px;height:1px;background:#ded8c8;"></div><div style="left:733px;top:601px;width:1px;height:18px;background:#ded8c8;"></div><div style="left:717px;top:602px;width:16px;height:16px;background:#ded8c8;"></div><div style="left:717px;top:602px;width:15px;height:1px;background:#ded8c8;"></div><div style="left:717px;top:602px;width:1px;height:15px;background:#ded8c8;"></div><div style="left:718px;top:603px;width:13px;height:1px;background:#f1ede3;"></div><div style="left:718px;top:603px;width:1px;height:13px;background:#f1ede3;"></div><div style="left:718px;top:616px;width:14px;height:1px;background:#aa9668;"></div><div style="left:731px;top:603px;width:1px;height:14px;background:#aa9668;"></div><div style="left:717px;top:617px;width:16px;height:1px;background:#404040;"></div><div style="left:732px;top:602px;width:1px;height:16px;background:#404040;"></div><svg style="position:absolute;left:721px;top:608px" width="7" height="4" viewBox="0 0 7 4"><path d="M0 0 H7 L3.5 4 Z" fill="#000"/></svg><div class="t" style="left:563.96px;top:605px;font-size:11px;line-height:13px;font-weight:normal;color:#000;transform:scaleX(0.9641);transform-origin:0 0;width:158.73px;overflow:hidden;">CP_undefined</div><div style="left:263px;top:624px;width:353px;height:1px;background:#aa9668;"></div><div style="left:263px;top:624px;width:1px;height:21px;background:#aa9668;"></div><div style="left:264px;top:625px;width:351px;height:1px;background:#f1ede3;"></div><div style="left:264px;top:625px;width:1px;height:19px;background:#f1ede3;"></div><div style="left:615px;top:625px;width:1px;height:20px;background:#aa9668;"></div><div style="left:616px;top:624px;width:1px;height:21px;background:#f1ede3;"></div><div style="left:265px;top:626px;width:250px;height:18px;background:#ded8c8;"></div><div style="left:265px;top:626px;width:249px;height:1px;background:#aa9668;"></div><div style="left:265px;top:626px;width:1px;height:17px;background:#aa9668;"></div><div style="left:265px;top:643px;width:250px;height:1px;background:#f1ede3;"></div><div style="left:514px;top:626px;width:1px;height:18px;background:#f1ede3;"></div><div style="left:266px;top:627px;width:247px;height:1px;background:#000;"></div><div style="left:266px;top:627px;width:1px;height:15px;background:#000;"></div><div style="left:266px;top:642px;width:248px;height:1px;background:#ded8c8;"></div><div style="left:513px;top:627px;width:1px;height:16px;background:#ded8c8;"></div><div style="left:523px;top:626px;width:70px;height:18px;background:#ded8c8;"></div><div style="left:523px;top:626px;width:69px;height:1px;background:#aa9668;"></div><div style="left:523px;top:626px;width:1px;height:17px;background:#aa9668;"></div><div style="left:523px;top:643px;width:70px;height:1px;background:#f1ede3;"></div><div style="left:592px;top:626px;width:1px;height:18px;background:#f1ede3;"></div><div style="left:524px;top:627px;width:67px;height:1px;background:#000;"></div><div style="left:524px;top:627px;width:1px;height:15px;background:#000;"></div><div style="left:524px;top:642px;width:68px;height:1px;background:#ded8c8;"></div><div style="left:591px;top:627px;width:1px;height:16px;background:#ded8c8;"></div><div style="left:596px;top:627px;width:18px;height:16px;background:#ded8c8;"></div><div style="left:596px;top:627px;width:17px;height:1px;background:#f1ede3;"></div><div style="left:596px;top:627px;width:1px;height:15px;background:#f1ede3;"></div><div style="left:597px;top:641px;width:16px;height:1px;background:#aa9668;"></div><div style="left:612px;top:628px;width:1px;height:14px;background:#aa9668;"></div><div style="left:596px;top:642px;width:18px;height:1px;background:#404040;"></div><div style="left:613px;top:627px;width:1px;height:16px;background:#404040;"></div><svg style="position:absolute;left:596px;top:627px" width="18" height="16" viewBox="0 0 18 16"><defs><radialGradient id="gb" cx="0.4" cy="0.35" r="0.7"><stop offset="0" stop-color="#8080ff"/><stop offset="1" stop-color="#0000b0"/></radialGradient><radialGradient id="go" cx="0.4" cy="0.35" r="0.7"><stop offset="0" stop-color="#ffd050"/><stop offset="1" stop-color="#e08000"/></radialGradient></defs><circle cx="11.5" cy="10.4" r="3" fill="url(#go)" stroke="#503000" stroke-width="0.6"/><circle cx="6.1" cy="5.1" r="3.1" fill="url(#gb)" stroke="#000040" stroke-width="0.5"/></svg><div style="left:625px;top:628px;width:13px;height:13px;background:#fff;"></div><div style="left:625px;top:628px;width:12px;height:1px;background:#aa9668;"></div><div style="left:625px;top:628px;width:1px;height:12px;background:#aa9668;"></div><div style="left:625px;top:640px;width:13px;height:1px;background:#f1ede3;"></div><div style="left:637px;top:628px;width:1px;height:13px;background:#f1ede3;"></div><div style="left:626px;top:629px;width:10px;height:1px;background:#404040;"></div><div style="left:626px;top:629px;width:1px;height:10px;background:#404040;"></div><div style="left:626px;top:639px;width:11px;height:1px;background:#ded8c8;"></div><div style="left:636px;top:629px;width:1px;height:11px;background:#ded8c8;"></div><div class="t" style="left:640.22px;top:629px;font-size:11px;line-height:13px;font-weight:normal;color:#000;transform:scaleX(0.9676);transform-origin:0 0;">System</div><div style="left:5px;top:658px;width:736px;height:22px;background:#ded8c8;"></div><div style="left:5px;top:658px;width:735px;height:1px;background:#f1ede3;"></div><div style="left:5px;top:658px;width:1px;height:21px;background:#f1ede3;"></div><div style="left:6px;top:678px;width:734px;height:1px;background:#aa9668;"></div><div style="left:739px;top:659px;width:1px;height:20px;background:#aa9668;"></div><div style="left:5px;top:679px;width:736px;height:1px;background:#404040;"></div><div style="left:740px;top:658px;width:1px;height:22px;background:#404040;"></div><div class="t" style="left:367.74px;top:663px;font-size:11px;line-height:13px;font-weight:normal;color:#000;transform:scaleX(0.9558);transform-origin:0 0;">Finish</div><svg style="position:absolute;left:348px;top:660px" width="18" height="18" viewBox="0 0 18 18"><path d="M3 10.6 Q4.4 12 5.6 15 Q8.5 8.5 16 2.8" stroke="#d88420" stroke-width="4.4" fill="none" stroke-linecap="round" stroke-linejoin="round"/><path d="M3 10.6 Q4.4 12 5.6 15 Q8.5 8.5 16 2.8" stroke="#ffffff" stroke-width="2.8" fill="none" stroke-linecap="round" stroke-linejoin="round"/></svg><div class="t" style="left:7.86px;top:10px;font-size:12.5px;line-height:16px;font-weight:bold;color:#8c0a1c;letter-spacing:0.422px;-webkit-text-stroke:0;">Delete selected property</div><div style="left:13px;top:25px;width:1px;height:148px;background:#8c0a1c;"></div><div class="t" style="left:27.89px;top:28px;font-size:12.5px;line-height:16px;font-weight:bold;color:#8c0a1c;letter-spacing:0.389px;-webkit-text-stroke:0;">Create extension attribute</div><div style="left:33px;top:44px;width:1px;height:127px;background:#8c0a1c;"></div><div class="t" style="left:47.99px;top:44px;font-size:12.5px;line-height:16px;font-weight:bold;color:#8c0a1c;letter-spacing:0.378px;-webkit-text-stroke:0;">Create extension reference</div><div style="left:53px;top:60px;width:1px;height:113px;background:#8c0a1c;"></div><div class="t" style="left:66.79px;top:62px;font-size:12.5px;line-height:16px;font-weight:bold;color:#8c0a1c;letter-spacing:0.321px;-webkit-text-stroke:0;">Create extension relationship</div><div style="left:73px;top:79px;width:1px;height:92px;background:#8c0a1c;"></div><div class="t" style="left:87.89px;top:78px;font-size:12.5px;line-height:16px;font-weight:bold;color:#8c0a1c;letter-spacing:0.354px;-webkit-text-stroke:0;">Check seleted extension definition</div><div style="left:97px;top:93px;width:1px;height:78px;background:#8c0a1c;"></div><div class="t" style="left:108.79px;top:95px;font-size:12.5px;line-height:16px;font-weight:bold;color:#8c0a1c;letter-spacing:0.098px;-webkit-text-stroke:0;">Check extension schema</div><div style="left:114px;top:112px;width:1px;height:59px;background:#8c0a1c;"></div><div class="t" style="left:130.76px;top:113px;font-size:12.5px;line-height:16px;font-weight:bold;color:#8c0a1c;letter-spacing:0.123px;-webkit-text-stroke:0;">Export extension schema</div><div style="left:139px;top:130px;width:1px;height:42px;background:#8c0a1c;"></div><div class="t" style="left:156.36px;top:130px;font-size:12.5px;line-height:16px;font-weight:bold;color:#8c0a1c;letter-spacing:0.228px;-webkit-text-stroke:0;">Import extension schema</div><div style="left:159px;top:144px;width:1px;height:28px;background:#8c0a1c;"></div>
</body></html>
